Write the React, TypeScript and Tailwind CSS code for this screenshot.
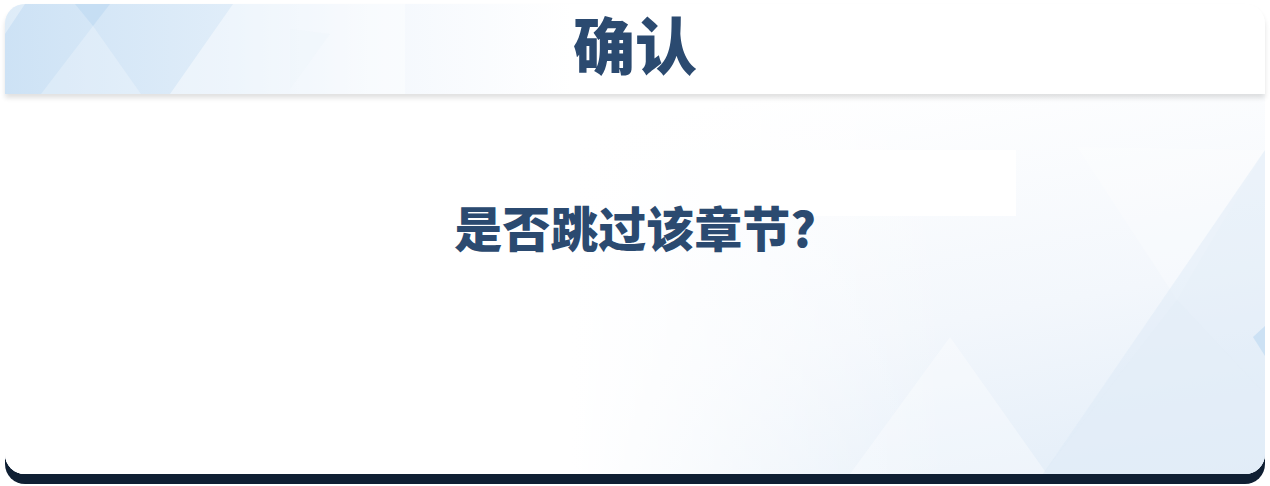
const HeaderPattern = () => (
  <svg className="absolute inset-0" width="1260" height="90" viewBox="0 0 1260 90">
    <defs>
      <linearGradient id="hg" x1="0" y1="0" x2="1" y2="0">
        <stop offset="0" stopColor="#cde2f5" />
        <stop offset="0.18" stopColor="#e0edf9" />
        <stop offset="0.3" stopColor="#f4f8fd" />
        <stop offset="0.45" stopColor="#ffffff" />
      </linearGradient>
    </defs>
    <rect width="1260" height="90" fill="url(#hg)" />
    <polygon points="0,30 20,0 0,0" fill="#ffffff" opacity="0.35" />
    <polygon points="70,0 105,0 88,22" fill="#bcd8f1" opacity="0.6" />
    <polygon points="88,22 36,90 136,90" fill="#ffffff" opacity="0.25" />
    <polygon points="228,0 165,90 400,90 400,0" fill="#ffffff" opacity="0.45" />
    <polygon points="285,25 285,85 325,30" fill="#eef4fb" opacity="0.4" />
  </svg>
);

const BodyPattern = () => (
  <svg className="absolute inset-0" width="1260" height="380" viewBox="0 0 1260 380">
    <defs>
      <linearGradient id="bg" x1="0.45" y1="0.1" x2="1" y2="1">
        <stop offset="0" stopColor="#ffffff" />
        <stop offset="0.55" stopColor="#f3f7fc" />
        <stop offset="1" stopColor="#e2edf8" />
      </linearGradient>
      <linearGradient id="fade" x1="0" y1="0" x2="1" y2="0">
        <stop offset="0.45" stopColor="#ffffff" stopOpacity="1" />
        <stop offset="0.75" stopColor="#ffffff" stopOpacity="0" />
      </linearGradient>
    </defs>
    <rect width="1260" height="380" fill="url(#bg)" />
    <polygon points="945,243 845,380 1042,380" fill="#ffffff" opacity="0.35" />
    <polygon points="1072,53 1172,206 1260,56" fill="#ffffff" opacity="0.25" />
    <polygon points="1038,380 1260,56 1260,380" fill="#dbe9f6" opacity="0.45" />
    <polygon points="1248,243 1260,232 1260,262" fill="#c6ddf2" opacity="0.8" />
    <polygon points="1172,206 1038,380 1260,380 1260,300" fill="#e4eef8" opacity="0.5" />
    <rect width="1260" height="380" fill="url(#fade)" />
    <rect x="695" y="56" width="316" height="66" fill="#ffffff" />
  </svg>
);

export default function App() {
  return (
    <div className="w-[1270px] h-[486px] bg-white pt-1 pl-[5px]">
      <div className="relative w-[1260px] h-[470px] rounded-[20px] bg-white shadow-[0_10px_0_0_#0f1f33] flex flex-col">
        <div className="relative h-[90px] rounded-t-[20px] shadow-[0_4px_5px_rgba(0,0,0,0.12)] z-10">
          <div className="absolute inset-0 rounded-t-[20px] overflow-hidden">
            <HeaderPattern />
          </div>
          <div className="relative flex justify-center">
            <h1 className="text-[62px] leading-[78px] font-black text-[#2b4a70] font-['Noto_Sans_CJK_SC',sans-serif]">
              确认
            </h1>
          </div>
        </div>
        <div className="relative flex-1 rounded-b-[20px] overflow-hidden">
          <BodyPattern />
          <div className="relative flex justify-center pt-[108px]">
            <p className="text-[48px] leading-none font-black text-[#2b4a70] font-['Noto_Sans_CJK_SC',sans-serif]">
              是否跳过该章节?
            </p>
          </div>
        </div>
      </div>
    </div>
  );
}
